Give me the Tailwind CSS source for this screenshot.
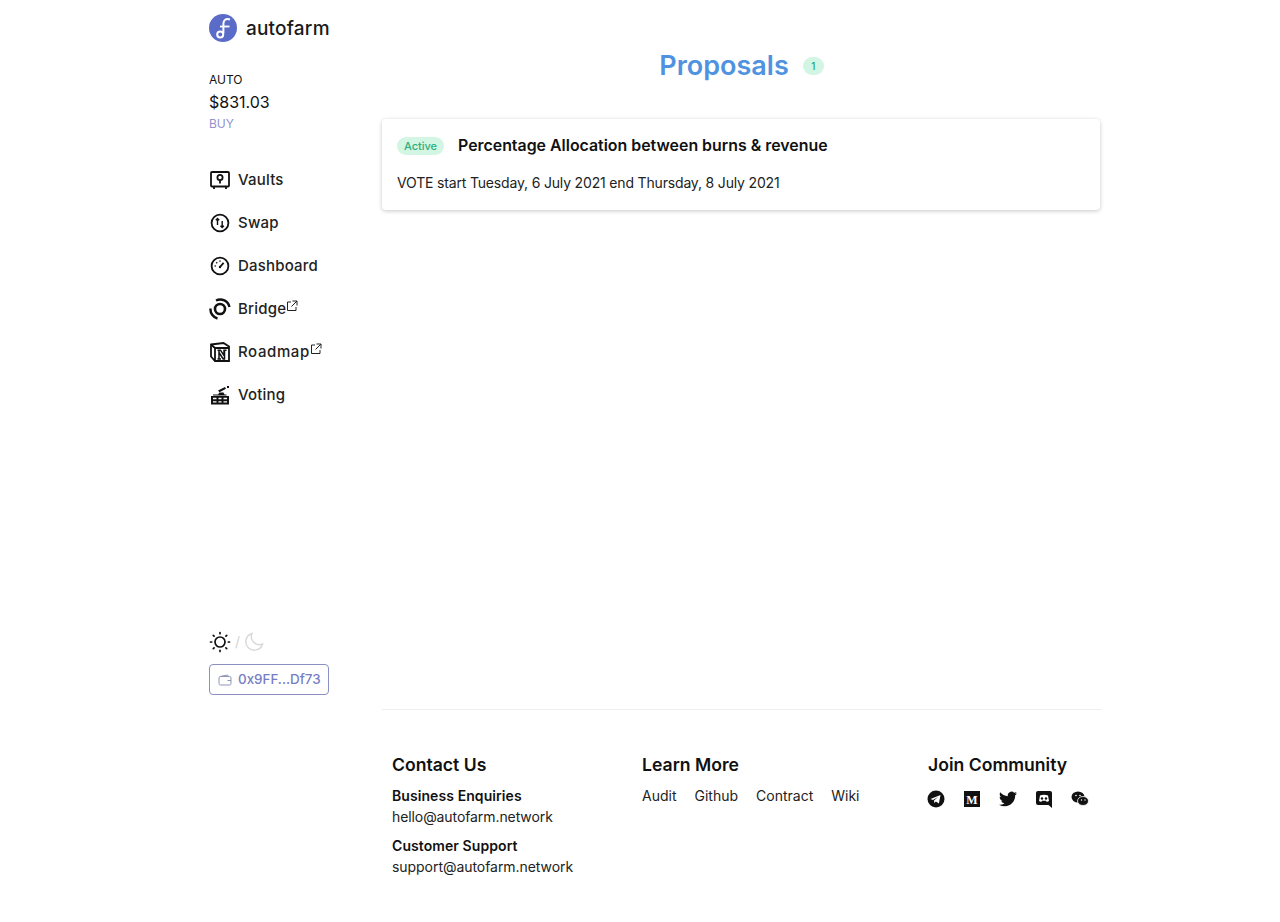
<!DOCTYPE html>
<html lang="en">
<head>
    <meta charset="UTF-8">
    <title>Autofarm Proposals</title>
    <script src="https://cdn.jsdelivr.net/npm/@tailwindcss/browser@4"></script>
</head>
<body class="bg-white text-[#111] font-['Inter',sans-serif]">
    <div class="w-[1280px] h-[922px] overflow-hidden flex pl-[209px]">
        <!-- Sidebar -->
        <aside class="w-[173px] h-[695px] shrink-0 flex flex-col justify-between">
            <div>
                <div class="flex items-center gap-[9px] pt-[14px] h-[42px]">
                    <svg width="28" height="28" viewBox="0 0 28 28" class="shrink-0">
                        <circle cx="14" cy="14" r="14" fill="#5a6cc8"/>
                        <path d="M21 5.500c-4.200-1.300-6.600.6-6.600 4.300V19.500" fill="none" stroke="#fff" stroke-width="2"/>
                        <path d="M11 12.500h9.500" fill="none" stroke="#fff" stroke-width="1.800"/>
                        <circle cx="11.200" cy="20.500" r="3" fill="none" stroke="#fff" stroke-width="2"/>
                    </svg>
                    <span class="text-[19px] leading-none tracking-[0.2px] font-medium text-[#1a1a1a]">autofarm</span>
                </div>
                <div class="mt-[30px] text-[12px] leading-[16px]">AUTO</div>
                <div class="mt-[4px] text-[16px] leading-[20px]">$831.03</div>
                <div class="mt-[4px] text-[12px] leading-[16px] text-[#8f93cc]">BUY</div>

                <nav class="mt-[37px] flex flex-col gap-[21px] text-[15px] leading-[22px] tracking-[0.2px] font-[450] text-[#222]">
                    <a class="flex items-center h-[22px]">
                        <svg width="20" height="20" viewBox="0 0 20 20" class="ml-[1px] mr-[8px]" fill="none" stroke="#111" stroke-width="1.800">
                            <rect x="1" y="2" width="18" height="14.500" rx="1"/>
                            <circle cx="10" cy="7.500" r="2.600"/>
                            <path d="M10 10v3.500M4 16.500V19M16 16.500V19"/>
                        </svg>
                        Vaults
                    </a>
                    <a class="flex items-center h-[22px]">
                        <svg width="20" height="20" viewBox="0 0 20 20" class="ml-[1px] mr-[8px]" fill="none" stroke="#111" stroke-width="1.800">
                            <circle cx="10" cy="10" r="8.400"/>
                            <path d="M7.500 12V5.500M5.800 7.300l1.700-1.800 1.700 1.800" stroke-width="1.400"/>
                            <path d="M12.200 8v6.500M10.500 12.700l1.700 1.800 1.700-1.800" stroke-width="1.400"/>
                        </svg>
                        Swap
                    </a>
                    <a class="flex items-center h-[22px]">
                        <svg width="20" height="20" viewBox="0 0 20 20" class="ml-[1px] mr-[8px]" fill="none" stroke="#111" stroke-width="1.800">
                            <circle cx="10" cy="10" r="8.400"/>
                            <path d="M10 11l3.600-4.200" stroke-width="1.800"/>
                            <path d="M4.600 10h1.200M6.300 6.300l.9.900M10 4.600v1.200" stroke-width="1.400"/>
                            <circle cx="10" cy="11" r="1.200" fill="#111" stroke="none"/>
                        </svg>
                        Dashboard
                    </a>
                    <a class="flex items-center h-[22px]">
                        <svg width="22" height="22" viewBox="0 0 22 22" class="mr-[7px]" fill="none" stroke="#111">
                            <circle cx="11" cy="11" r="5" stroke-width="2.600"/>
                            <path d="M1.500 10.500a9.500 9.500 0 0 0 7 10" stroke-width="2.400"/>
                            <path d="M7 2.500a9.500 9.500 0 0 1 13.500 6.500" stroke-width="2.400"/>
                        </svg>
                        <span>Bridge</span>
                        <svg width="12" height="12" viewBox="0 0 12 12" class="mb-[6px]" fill="none" stroke="#222" stroke-width="1">
                            <path d="M5 2H1.500v8.500H10V7M6.500 1H11v4.500M11 1L5.500 6.500"/>
                        </svg>
                    </a>
                    <a class="flex items-center h-[22px]">
                        <svg width="20" height="20" viewBox="0 0 20 20" class="ml-[1px] mr-[8px]">
                            <path d="M1 2.500L13.500 1 19 4.500V19H5L1 14.500z" fill="#fff" stroke="#111" stroke-width="1.800"/>
                            <path d="M1.500 3L5 6h14" fill="none" stroke="#111" stroke-width="1.800"/>
                            <path d="M5 6v13" fill="none" stroke="#111" stroke-width="1.800"/>
                            <path d="M7.500 8.200h3l3.500 5.300V8.200h2.500M7.500 17h3.500M9 8.200V17M14.500 8.200V17h-1.300L9 10.500" fill="none" stroke="#111" stroke-width="1.500"/>
                        </svg>
                        <span class="tracking-[0.6px]">Roadmap</span>
                        <svg width="12" height="12" viewBox="0 0 12 12" class="mb-[6px]" fill="none" stroke="#222" stroke-width="1">
                            <path d="M5 2H1.500v8.500H10V7M6.500 1H11v4.500M11 1L5.500 6.500"/>
                        </svg>
                    </a>
                    <a class="flex items-center h-[22px]">
                        <svg width="20" height="20" viewBox="0 0 20 20" class="ml-[1px] mr-[8px]">
                            <path d="M8 5.500l7-3.500 1 1.800-6.500 3.500z M17 1h2v2h-2z" fill="#111"/>
                            <path d="M3 9.500h5l1.500-2h4l1 2h2v1H3z" fill="#111"/>
                            <rect x="1" y="11" width="18" height="8.500" fill="#111"/>
                            <path d="M3 13.500h3.500M8.500 13.500h3M13.500 13.500h3.500M3 16.800h3.500M8.500 16.800h3M13.500 16.800h3.500" stroke="#fff" stroke-width="1.300"/>
                        </svg>
                        Voting
                    </a>
                </nav>
            </div>

            <div class="w-[120px]">
                <div class="flex items-center gap-[4px] mb-[11px]">
                    <svg width="22" height="22" viewBox="0 0 22 22" fill="none" stroke="#111" stroke-width="1.700" stroke-linecap="round">
                        <circle cx="11" cy="11" r="5"/>
                        <path d="M11 1.500v1.200M11 19.300v1.200M1.500 11h1.200M19.300 11h1.200M4.300 4.300l.8.800M16.900 16.900l.8.800M4.300 17.700l.8-.8M16.900 5.100l.8-.8"/>
                    </svg>
                    <span class="text-[14px] leading-none text-[#d5d5d5]">/</span>
                    <svg width="20" height="20" viewBox="0 0 20 20" fill="none" stroke="#d8d8d8" stroke-width="1.400">
                        <path d="M8 1.500a8.500 8.500 0 1 0 10.500 10.500A8 8 0 0 1 8 1.500z"/>
                    </svg>
                </div>
                <div class="h-[31px] rounded-[4px] border border-[#8a8fc4] flex items-center pl-[8px] gap-[6px]">
                    <svg width="14" height="12" viewBox="0 0 14 12" fill="none" stroke="#8f93b8" stroke-width="1">
                        <rect x="1" y="2.500" width="12" height="8.500" rx="1.500"/>
                        <path d="M2 2.500L9.500 1l1 1.500M9.500 6.500H13"/>
                    </svg>
                    <span class="text-[13.400px] font-medium text-[#777dc4]">0x9FF...Df73</span>
                </div>
            </div>
        </aside>

        <!-- Main -->
        <div class="w-[719px] shrink-0 flex flex-col">
            <div class="h-[710px] border-b border-[#eee]">
                <div class="pt-[48px] flex items-center justify-center gap-[14px]">
                    <h1 class="text-[27px] leading-[36px] font-semibold text-[#4f93e0]">Proposals</h1>
                    <span class="w-[21px] h-[18px] rounded-full bg-[#d3f5e4] text-[#27a671] text-[10px] font-medium flex items-center justify-center">1</span>
                </div>
                <div class="mt-[35px] mr-[1px] h-[91px] rounded-[4px] bg-white shadow-[0_1px_4px_rgba(0,0,0,0.22)] px-[15px]">
                    <div class="pt-[16px] flex items-center gap-[14px]">
                        <span class="w-[47px] h-[18px] rounded-full bg-[#d3f5e4] text-[#2bb07c] text-[11px] font-medium flex items-center justify-center">Active</span>
                        <span class="text-[15.900px] leading-[22px] font-semibold text-[#111]">Percentage Allocation between burns &amp; revenue</span>
                    </div>
                    <p class="mt-[16px] text-[14px] leading-[20px] tracking-[-0.17px] text-[#222]">VOTE start Tuesday, 6 July 2021 end Thursday, 8 July 2021</p>
                </div>
            </div>

            <!-- Footer -->
            <footer class="pt-[43px] pl-[10px] flex">
                <div class="w-[250px]">
                    <h3 class="text-[17.600px] leading-[24px] font-semibold">Contact Us</h3>
                    <div class="mt-[8px] text-[14px] leading-[22px] tracking-[0.08px] font-semibold">Business Enquiries</div>
                    <div class="text-[14px] leading-[20px] tracking-[-0.09px] text-[#222]">hello@autofarm.network</div>
                    <div class="mt-[8px] text-[14px] leading-[22px] tracking-[0.08px] font-semibold">Customer Support</div>
                    <div class="text-[14px] leading-[20px] tracking-[-0.05px] text-[#222]">support@autofarm.network</div>
                </div>
                <div class="w-[285px]">
                    <h3 class="text-[17.600px] leading-[24px] font-semibold">Learn More</h3>
                    <div class="mt-[8px] flex gap-[18px] text-[14px] leading-[22px] text-[#222]">
                        <span>Audit</span><span>Github</span><span>Contract</span><span>Wiki</span>
                    </div>
                </div>
                <div>
                    <h3 class="text-[17.600px] leading-[24px] font-semibold whitespace-nowrap pl-[1px]">Join Community</h3>
                    <div class="mt-[13px] flex gap-[18px]">
                        <svg width="18" height="18" viewBox="0 0 18 18">
                            <circle cx="9" cy="9" r="8.500" fill="#111"/>
                            <path d="M3.500 9l10-4-1.600 8.500-3-2-1.500 1.500-.4-2.500 4-3.500-5 3z" fill="#fff"/>
                        </svg>
                        <svg width="18" height="18" viewBox="0 0 18 18">
                            <rect x="1" y="1" width="16" height="16" fill="#111"/>
                            <text x="9" y="13.500" text-anchor="middle" font-family="Liberation Serif" font-weight="700" font-size="12" fill="#fff">M</text>
                        </svg>
                        <svg width="18" height="18" viewBox="0 0 24 24">
                            <path fill="#111" d="M23.950 4.570a10 10 0 0 1-2.820.77 4.960 4.960 0 0 0 2.160-2.720c-.95.550-2 .96-3.130 1.190a4.920 4.920 0 0 0-8.380 4.480C7.690 8.100 4.070 6.130 1.640 3.160a4.820 4.820 0 0 0-.67 2.480c0 1.710.87 3.210 2.190 4.100a4.900 4.900 0 0 1-2.230-.62v.06a4.920 4.920 0 0 0 3.950 4.830 5 5 0 0 1-2.210.08 4.940 4.940 0 0 0 4.600 3.420A9.870 9.870 0 0 1 0 19.540a14 14 0 0 0 7.560 2.210c9.050 0 14-7.500 14-13.980 0-.21 0-.42-.02-.63a9.940 9.940 0 0 0 2.410-2.570z"/>
                        </svg>
                        <svg width="18" height="18" viewBox="0 0 18 18">
                            <path d="M3 1h12a2 2 0 0 1 2 2v15l-3.500-3H3a2 2 0 0 1-2-2V3a2 2 0 0 1 2-2z" fill="#111"/>
                            <path d="M5 5.500c2.500-1 5.500-1 8 0l1 5.500-2.200 1-.8-1.200H7l-.8 1.200L4 11z" fill="#fff"/>
                            <circle cx="7" cy="8.500" r="1.200" fill="#111"/><circle cx="11" cy="8.500" r="1.200" fill="#111"/>
                        </svg>
                        <svg width="18" height="18" viewBox="0 0 18 18">
                            <ellipse cx="7" cy="7" rx="6.500" ry="5.500" fill="#111"/>
                            <ellipse cx="12" cy="11" rx="5.500" ry="4.500" fill="#111" stroke="#fff" stroke-width="0.800"/>
                            <circle cx="5" cy="5.500" r=".8" fill="#fff"/><circle cx="9" cy="5.500" r=".8" fill="#fff"/>
                            <circle cx="10.500" cy="10" r=".7" fill="#fff"/><circle cx="14" cy="10" r=".7" fill="#fff"/>
                        </svg>
                    </div>
                </div>
            </footer>
        </div>
    </div>
</body>
</html>
